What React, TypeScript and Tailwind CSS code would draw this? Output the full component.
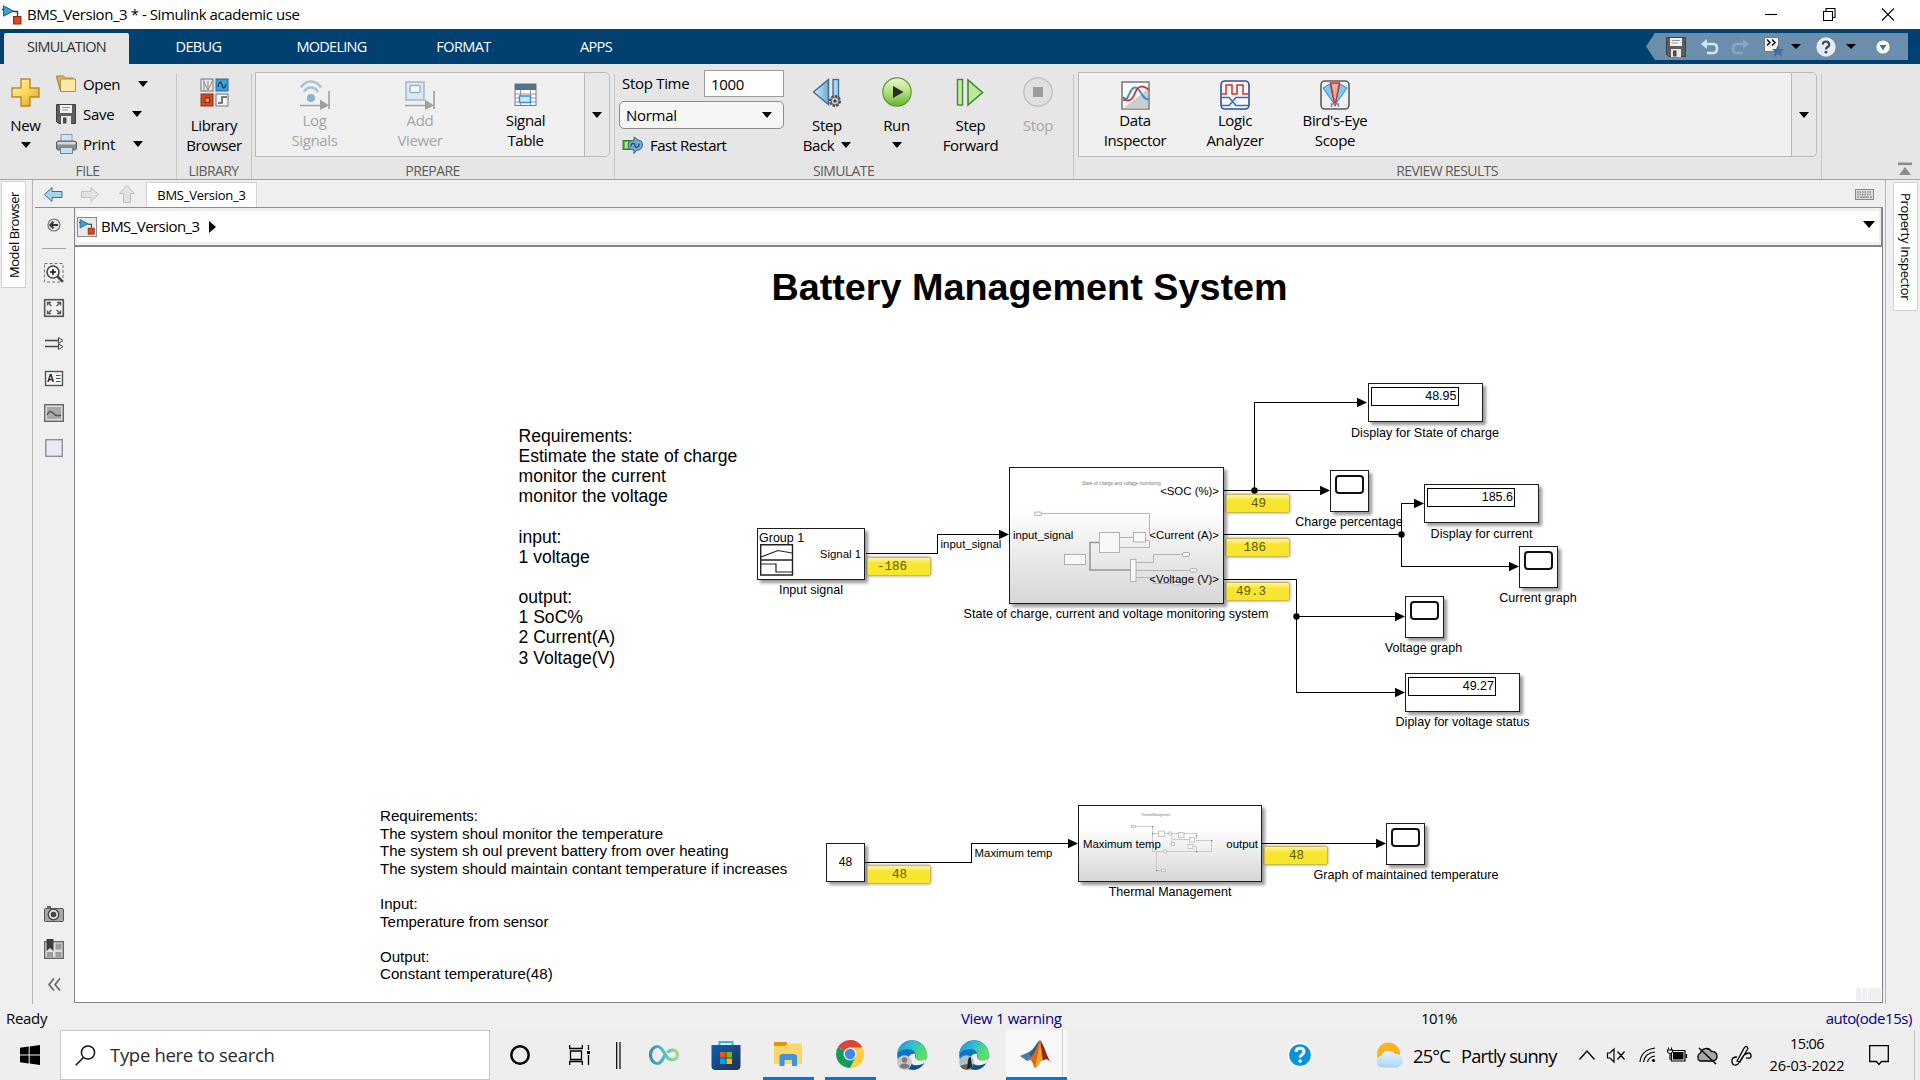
import React from "react";

type Kids = { children?: React.ReactNode };

/* ---------- small glyphs ---------- */
const Down = ({ w = 10, h = 6 }: { w?: number; h?: number }) => (
  <svg width={w} height={h} viewBox="0 0 11 6" preserveAspectRatio="none" className="shrink-0">
    <path d="M0 0H11L5.5 6Z" fill="#000" />
  </svg>
);

const ModelIcon = ({ s = 20 }: { s?: number }) => (
  <svg width={s} height={s} viewBox="0 0 20 20">
    <path d="M0 4.5H3M11 6.500H15.500V11" stroke="#333" strokeWidth="1.3" fill="none" />
    <path d="M1.500 .800 11.500 6 1.500 11.200Z" fill="#3f9fd6" stroke="#1c5f8c" strokeWidth="1" />
    <rect x="11.500" y="11.500" width="7.500" height="7.500" fill="#d9481c" stroke="#8c2a0c" />
  </svg>
);

const Floppy = () => (
  <svg width="20" height="20" viewBox="0 0 20 20">
    <path d="M.5.5H19.5V19.5H2.5L.5 17.5Z" fill="#5d5d5d" stroke="#3f3f3f" />
    <rect x="4" y="1" width="12" height="8" fill="#f1f1f1" />
    <path d="M6 3.5H14M6 6H12" stroke="#999" strokeWidth="1.2" />
    <rect x="5" y="12" width="10" height="8" fill="#e6e6e6" />
    <rect x="7" y="13.5" width="3.5" height="6" fill="#4a4a4a" />
  </svg>
);

const PlusIcon = () => (
  <svg width="29" height="29" viewBox="0 0 29 29">
    <defs>
      <linearGradient id="plusg" x1="0" y1="0" x2="1" y2="1">
        <stop offset="0" stopColor="#fff6b8" />
        <stop offset=".5" stopColor="#fbd75a" />
        <stop offset="1" stopColor="#d99b1a" />
      </linearGradient>
    </defs>
    <path d="M10 1H19V10H28V19H19V28H10V19H1V10H10Z" fill="url(#plusg)" stroke="#b98a22" strokeWidth="1.4" />
  </svg>
);

const FolderIcon = () => (
  <svg width="21" height="18" viewBox="0 0 21 18">
    <path d="M.500 1H7.500L9.500 3H17V16H5Z" fill="#d9b75c" stroke="#a98a3a" />
    <path d="M4.500 4H19.500V16.500H4.500Z" fill="#fbe9a6" stroke="#b3923c" />
    <path d="M.500 1.500 4.500 16.500" stroke="#a98a3a" />
  </svg>
);

const PrintIcon = () => (
  <svg width="21" height="20" viewBox="0 0 21 20">
    <rect x="5" y=".5" width="11" height="8" fill="#cfe3f3" stroke="#8b9cab" />
    <rect x=".5" y="7" width="20" height="9" rx="2" fill="#8c8c8c" stroke="#606060" />
    <rect x="1.5" y="8" width="18" height="2.5" fill="#d8d8d8" />
    <rect x="4.5" y="13.5" width="12" height="6" fill="#bfe0f7" stroke="#72869a" />
  </svg>
);

const LibraryIcon = () => (
  <svg width="29" height="29" viewBox="0 0 29 29">
    <rect x="1" y="1" width="12" height="12" fill="#e8e8e8" stroke="#777" />
    <path d="M4 1V13M4 4 8 12M8 3V12L13 2" stroke="#888" fill="none" />
    <rect x="16" y="1" width="12" height="12" fill="#3d9fd8" stroke="#1f6c9c" />
    <path d="M18 9C19 3 21 3 22 7S25 11 26 6" stroke="#0d3d63" fill="none" strokeWidth="1.2" />
    <rect x="1" y="16" width="12" height="12" fill="#cf4a20" stroke="#93300f" />
    <rect x="5" y="20" width="4.5" height="4.5" fill="#e98a66" stroke="#7c2509" />
    <rect x="16" y="16" width="12" height="12" fill="#f2f2f2" stroke="#777" />
    <path d="M18 25H22V19H27" stroke="#555" fill="none" strokeWidth="1.5" />
  </svg>
);

const LogSignalsIcon = () => (
  <svg width="30" height="30" viewBox="0 0 30 30">
    <path d="M1 7.500C6-.500 16-.500 21 7.500M4 12C7 6 15 6 18 12" stroke="#a9c3d6" strokeWidth="2.600" fill="none" />
    <circle cx="11" cy="18" r="4" fill="#8fb0cb" />
    <path d="M0 25.500H21M29 11V29" stroke="#a0a0a0" strokeWidth="1.600" />
    <path d="M20 19.500 29 25.500 20 30Z" fill="#a0a0a0" />
  </svg>
);

const AddViewerIcon = () => (
  <svg width="30" height="30" viewBox="0 0 30 30">
    <rect x="1" y="2" width="18" height="18" fill="#dde8f0" stroke="#a5bccd" strokeWidth="1.6" />
    <rect x="5" y="5.5" width="10" height="7" rx="1" fill="#f5f9fc" stroke="#8fb3cf" strokeWidth="1.4" />
    <path d="M0 25.5H21M29 11V29" stroke="#a0a0a0" strokeWidth="1.6" />
    <path d="M20 19.5 29 25.5 20 30Z" fill="#a0a0a0" />
  </svg>
);

const SignalTableIcon = () => (
  <svg width="23" height="24" viewBox="0 0 23 24">
    <rect x="1" y="1" width="21" height="21.5" fill="#fff" stroke="#777" />
    <rect x="1" y="1" width="21" height="6" fill="#5a6f88" />
    <rect x="3" y="2.5" width="4" height="3" fill="#2a7fd6" />
    <path d="M1 11H22M1 15H22M1 19H22M6.5 7V22M16.5 7V22" stroke="#888" strokeWidth=".9" />
    <rect x="5.5" y="13" width="11" height="6.5" fill="#cfe6fb" stroke="#3b8fe0" strokeWidth="1.5" />
  </svg>
);

const RestartIcon = () => (
  <svg width="21" height="17" viewBox="0 0 21 17">
    <rect x="1" y="3.5" width="8" height="9" fill="#59b53c" stroke="#2f7a20" />
    <rect x="3" y="5" width="3" height="6" fill="#b9ea9c" />
    <path d="M12 0 17 3.5H18.5Q20.500 5 20.500 8T17.500 13H15L12 16.500V13Q6 12.500 6 8T12 3.500Z" fill="#7aa9cb" stroke="#2e5f86" />
    <path d="M9 9.5C9 5.500 13 5.500 13 8.500S17 11 17 6.500" fill="none" stroke="#20527a" strokeWidth="1.400" />
  </svg>
);

const StepBackIcon = () => (
  <svg width="30" height="30" viewBox="0 0 30 30">
    <defs>
      <linearGradient id="sbg" x1="0" y1="0" x2="1" y2="0">
        <stop offset="0" stopColor="#d9effc" />
        <stop offset="1" stopColor="#6ba9d8" />
      </linearGradient>
    </defs>
    <path d="M16.500 2.500V27.500L1.500 15Z" fill="url(#sbg)" stroke="#3a6a94" strokeWidth="1.400" />
    <rect x="21" y="2.500" width="5.500" height="20" fill="#a9d3f0" stroke="#3a6a94" strokeWidth="1.300" />
    <circle cx="23" cy="24" r="5" fill="#ddd" stroke="#4a4a4a" strokeWidth="2" strokeDasharray="2.600 1.200" />
    <circle cx="23" cy="24" r="4" fill="#c9c9c9" stroke="#555" />
    <circle cx="23" cy="24" r="1.500" fill="#333" />
  </svg>
);

const RunIcon = () => (
  <svg width="30" height="30" viewBox="0 0 30 30">
    <defs>
      <linearGradient id="rung" x1="0" y1="0" x2="0" y2="1">
        <stop offset="0" stopColor="#e9f8d0" />
        <stop offset=".5" stopColor="#b4e07c" />
        <stop offset="1" stopColor="#63b52c" />
      </linearGradient>
    </defs>
    <circle cx="15" cy="15" r="14.200" fill="url(#rung)" stroke="#5c9a35" strokeWidth="1.200" />
    <path d="M11 9 21.500 15 11 21Z" fill="#2b2b2b" />
  </svg>
);

const StepForwardIcon = () => (
  <svg width="30" height="30" viewBox="0 0 30 30">
    <rect x="1.500" y="2.500" width="5" height="25.500" fill="#c6eba8" stroke="#3f8a34" strokeWidth="1.400" />
    <path d="M12 3V28L26.500 15.500Z" fill="#b9e89a" stroke="#3f8a34" strokeWidth="1.600" />
  </svg>
);

const StopIcon = () => (
  <svg width="30" height="30" viewBox="0 0 30 30">
    <circle cx="15" cy="15" r="14.200" fill="#e0e0e0" stroke="#bcbcbc" strokeWidth="1.200" />
    <rect x="10" y="10" width="10" height="10" fill="#9c9c9c" />
  </svg>
);

const DataInspectorIcon = () => (
  <svg width="29" height="29" viewBox="0 0 29 29">
    <rect x="1" y="1" width="27" height="27" fill="#fafafa" stroke="#777" strokeWidth="1.500" />
    <path d="M2 27.500 27 8V27.500Z" fill="#cccccc" />
    <path d="M2 19C8 21 8 6.500 14 6.500S21 20 28 18" stroke="#3f8fcf" strokeWidth="1.900" fill="none" />
    <path d="M2 16C6 22 11 20 14 12S22 4 28 9" stroke="#d23b35" strokeWidth="1.900" fill="none" />
  </svg>
);

const LogicIcon = () => (
  <svg width="30" height="30" viewBox="0 0 30 30">
    <rect x="1" y="1" width="28" height="28" rx="4" fill="#f8f8fa" stroke="#2d4f8f" strokeWidth="1.600" />
    <path d="M2 14H6V5H12V14H17V5H23V14H28" stroke="#d0312b" strokeWidth="1.500" fill="none" />
    <path d="M2 17.500H9L16 25.500H28M2 25.500H9L16 17.500H28" stroke="#2f6fb8" strokeWidth="1.500" fill="none" />
  </svg>
);

const BirdIcon = () => (
  <svg width="30" height="30" viewBox="0 0 30 30">
    <rect x="1" y="1" width="28" height="28" rx="4" fill="#efefef" stroke="#5a5a5a" strokeWidth="1.600" />
    <path d="M3 8 10 4 15 25Z" fill="#7cc8f2" stroke="#2d86c4" />
    <path d="M27 8 20 4 15 25Z" fill="#7cc8f2" stroke="#2d86c4" />
    <path d="M10.500 3H19.500L15 26Z" fill="#e5aaa0" stroke="#c93427" strokeWidth="1.400" />
    <path d="M11.500 27V24H18.500V27" stroke="#888" fill="none" strokeWidth="1.500" />
  </svg>
);

/* ---------- ribbon parts ---------- */
const Section = ({ label, cls, children }: Kids & { label: string; cls: string }) => (
  <div className={"relative flex h-[115px] shrink-0 flex-col " + cls}>
    <div className="flex h-[98px] shrink-0">{children}</div>
    <div className="h-[17px] pr-[2px] text-center text-[14px] leading-[18px] tracking-[-0.600px] text-[#5c5c5c]">{label}</div>
    <div className="absolute right-0 top-[10px] h-[105px] w-px bg-[#c6c6c6]" />
  </div>
);

const Big = ({ icon, cls, children }: Kids & { icon: React.ReactNode; cls: string }) => (
  <div className={"flex shrink-0 flex-col items-center text-center text-[15px] leading-[20px] tracking-[-0.350px] " + cls}>
    <div className="flex h-[30px] items-center justify-center">{icon}</div>
    {children}
  </div>
);

const FileRow = ({ icon, text, gap }: { icon: React.ReactNode; text: string; gap: string }) => (
  <div className="flex h-[30px] items-center">
    <div className="flex w-[27px] items-center">{icon}</div>
    <div className={"text-[15px] tracking-[-0.300px] " + gap}>{text}</div>
    <Down />
  </div>
);

const Gallery = ({ cls, children }: Kids & { cls: string }) => (
  <div className={"mt-[8px] flex h-[85px] rounded-r-[5px] border border-[#b9b9b9] bg-[#f0f0f0] " + cls}>
    <div className="flex flex-1 pl-[6px] pt-[7px]">{children}</div>
    <div className="flex w-[25px] items-center justify-center rounded-r-[5px] border-l border-[#b9b9b9] bg-[#e8e8e8]">
      <Down w={10} />
    </div>
  </div>
);

const Ribbon = () => (
  <div className="flex h-[116px] border-b border-[#a3a3a3] bg-[#e6e6e6]">
    <Section label="FILE" cls="w-[177px]">
      <Big icon={<PlusIcon />} cls="w-[51px] pt-[13px]">
        <div className="mt-[8px]">New</div>
        <div className="flex h-[20px] items-center"><Down /></div>
      </Big>
      <div className="ml-[5px] flex flex-col pt-[5px]">
        <FileRow icon={<FolderIcon />} text="Open" gap="w-[55px]" />
        <FileRow icon={<Floppy />} text="Save" gap="w-[49px]" />
        <FileRow icon={<PrintIcon />} text="Print" gap="w-[50px]" />
      </div>
    </Section>
    <Section label="LIBRARY" cls="w-[75px]">
      <Big icon={<LibraryIcon />} cls="w-[74px] pt-[13px]">
        <div className="mt-[8px]">Library</div>
        <div>Browser</div>
      </Big>
    </Section>
    <Section label="PREPARE" cls="w-[363px]">
      <Gallery cls="ml-[3px] w-[355px]">
        <Big icon={<LogSignalsIcon />} cls="w-[105px] text-[#a6a6a6]">
          <div>Log</div>
          <div>Signals</div>
        </Big>
        <Big icon={<AddViewerIcon />} cls="w-[106px] text-[#a6a6a6]">
          <div>Add</div>
          <div>Viewer</div>
        </Big>
        <Big icon={<SignalTableIcon />} cls="w-[105px]">
          <div>Signal</div>
          <div>Table</div>
        </Big>
      </Gallery>
    </Section>
    <Section label="SIMULATE" cls="w-[459px]">
      <div className="ml-[4px] w-[165px] pt-[6px] text-[15px] tracking-[-0.300px]">
        <div className="flex h-[27px] items-center justify-between pl-[3px]">
          <div>Stop Time</div>
          <div className="h-[27px] w-[80px] border border-[#9b9b9b] bg-white pl-[6px] leading-[26px]">1000</div>
        </div>
        <div className="mt-[4px] flex h-[28px] items-center justify-between rounded-[5px] border border-[#8c8c8c] bg-[#f6f6f6] pl-[6px] pr-[11px]">
          <div>Normal</div>
          <Down />
        </div>
        <div className="mt-[3px] flex h-[27px] items-center gap-[7px] pl-[3px] tracking-[-0.500px]">
          <RestartIcon />
          <div>Fast Restart</div>
        </div>
      </div>
      <div className="ml-[4px] flex pt-[13px]">
        <Big icon={<StepBackIcon />} cls="w-[78px]">
          <div className="mt-[8px]">Step</div>
          <div className="flex items-center gap-[7px]">Back <Down /></div>
        </Big>
        <Big icon={<RunIcon />} cls="w-[61px]">
          <div className="mt-[8px]">Run</div>
          <div className="flex h-[20px] items-center"><Down /></div>
        </Big>
        <Big icon={<StepForwardIcon />} cls="w-[87px]">
          <div className="mt-[8px]">Step</div>
          <div>Forward</div>
        </Big>
        <Big icon={<StopIcon />} cls="w-[48px] text-[#a6a6a6]">
          <div className="mt-[8px]">Stop</div>
        </Big>
      </div>
    </Section>
    <Section label="REVIEW RESULTS" cls="w-[748px]">
      <Gallery cls="ml-[4px] w-[739px]">
        <Big icon={<DataInspectorIcon />} cls="w-[100px]">
          <div>Data</div>
          <div>Inspector</div>
        </Big>
        <Big icon={<LogicIcon />} cls="w-[100px]">
          <div>Logic</div>
          <div>Analyzer</div>
        </Big>
        <Big icon={<BirdIcon />} cls="w-[100px]">
          <div>Bird's-Eye</div>
          <div>Scope</div>
        </Big>
      </Gallery>
    </Section>
    <div className="flex flex-1 items-end justify-end pb-[3px] pr-[8px]">
      <svg width="14" height="14" viewBox="0 0 14 14">
        <rect width="14" height="2.600" y=".500" fill="#8c8c8c" />
        <path d="M7 5 13 13H1Z" fill="#8c8c8c" />
      </svg>
    </div>
  </div>
);

const QuickAccess = () => (
  <div className="mr-[12px] flex h-[27px] w-[262px] items-center bg-[#6a8eac] pl-[20px] [clip-path:polygon(0_50%,9px_0,100%_0,100%_100%,9px_100%)]">
    <Floppy />
    <svg className="ml-[15px]" width="18" height="16" viewBox="0 0 18 16">
      <path d="M6 0V10L0 5Z" fill="#cfe6f7" />
      <path d="M5 5H12Q16 5 16 9.500T12 14H6" stroke="#cfe6f7" strokeWidth="2.600" fill="none" />
    </svg>
    <svg className="ml-[12px]" width="18" height="16" viewBox="0 0 18 16">
      <path d="M12 0V10L18 5Z" fill="#86a9c4" />
      <path d="M13 5H6Q2 5 2 9.500T6 14H12" stroke="#86a9c4" strokeWidth="2.600" fill="none" />
    </svg>
    <svg className="ml-[15px]" width="20" height="20" viewBox="0 0 20 20">
      <rect x=".500" y=".500" width="14" height="14" fill="#f4f4f4" stroke="#777" />
      <path d="M3 2.500 6 5.500 3 8.500M8 2.500 11 5.500 8 8.500" stroke="#111" strokeWidth="1.500" fill="none" />
      <path d="M14 8 16 12H20L17 15 18 20 14 17 10 20 11 15 8 12H12Z" fill="#3d6fa5" />
    </svg>
    <span className="ml-[7px] flex"><Down w={10} h={5} /></span>
    <svg className="ml-[15px]" width="20" height="20" viewBox="0 0 20 20">
      <circle cx="10" cy="10" r="9.700" fill="#e6ecf2" />
      <path d="M6.800 7.500Q7 4.500 10 4.500T13.200 7.400Q13.200 9 11.500 10T10 12.500" stroke="#33475c" strokeWidth="2.200" fill="none" />
      <circle cx="10" cy="15.200" r="1.400" fill="#33475c" />
    </svg>
    <span className="ml-[10px] flex"><Down w={10} h={5} /></span>
    <svg className="ml-[20px]" width="14" height="14" viewBox="0 0 14 14">
      <circle cx="7" cy="7" r="6.600" fill="#fff" />
      <path d="M3.500 5H10.500L7 10.500Z" fill="#4a7398" />
    </svg>
  </div>
);

/* ---------- palette ---------- */
const PaletteTop = () => (
  <svg width="40" height="260" viewBox="34 208 40 260" className="block">
    <circle cx="54" cy="225" r="6" fill="#e4e4e4" stroke="#777" strokeWidth="1.200" />
    <path d="M50 225H58M53.500 221.800 50.300 225 53.500 228.200" stroke="#333" strokeWidth="2" fill="none" />
    <path d="M42 248.500H66" stroke="#a5a5a5" />
    <rect x="44.500" y="263.500" width="18.500" height="18.500" fill="none" stroke="#777" strokeDasharray="3 2" />
    <circle cx="53" cy="272" r="6" fill="#f4f4f4" stroke="#4a4a4a" strokeWidth="1.600" />
    <path d="M50 272H56M53 269V275" stroke="#111" strokeWidth="1.500" />
    <path d="M57.500 276.500 62.500 281.500" stroke="#444" strokeWidth="2.500" />
    <rect x="44.700" y="299.700" width="18.600" height="16.600" fill="#f2f2f2" stroke="#555" strokeWidth="1.600" />
    <path d="M47.500 305.500V302.500H51M60.500 305.500V302.500H57M47.500 310.500V313.500H51M60.500 310.500V313.500H57M47.500 302.500 51.500 306M60.500 302.500 56.500 306M47.500 313.500 51.500 310M60.500 313.500 56.500 310" stroke="#555" strokeWidth="1.300" fill="none" />
    <path d="M45 340.500H60M45 346.500H60" stroke="#444" strokeWidth="1.400" />
    <path d="M58.500 337.500 63 340.500 58.500 343.500ZM58.500 343.800 63 346.600 58.500 349.500Z" fill="#eee" stroke="#444" />
    <rect x="45.500" y="371.500" width="17" height="14" fill="#f5f5f5" stroke="#555" strokeWidth="1.400" />
    <path d="M56 375.500H60.500M56 378.500H60.500M56 381.500H60.500" stroke="#555" />
    <text x="47" y="382" fontSize="10" fontWeight="bold" fontFamily="Liberation Sans" fill="#222">A</text>
    <rect x="44.700" y="404.700" width="18.600" height="16.600" fill="#dcdcdc" stroke="#666" strokeWidth="1.400" />
    <rect x="47" y="407" width="14" height="12" fill="#a9a9a9" />
    <path d="M47 415Q50 409 53 413T61 415" stroke="#555" strokeWidth="1.500" fill="none" />
    <rect x="45.700" y="439.700" width="16.600" height="16.600" fill="#e9e8f6" stroke="#8f8f98" strokeWidth="1.400" />
  </svg>
);

const PaletteBottom = () => (
  <svg width="40" height="100" viewBox="34 902 40 100" className="block">
    <rect x="44.500" y="908.500" width="19" height="13" rx="1" fill="#a8a8a8" stroke="#555" />
    <rect x="47" y="906" width="4" height="2.500" fill="#666" />
    <circle cx="53.500" cy="914.500" r="5.300" fill="#ddd" stroke="#444" strokeWidth="1.300" />
    <circle cx="53.500" cy="914.500" r="2.800" fill="#444" />
    <rect x="44.700" y="941.700" width="18.600" height="16.600" fill="#ddd" stroke="#666" strokeWidth="1.400" />
    <path d="M55.500 943.500H61.500V949.500H55.500ZM55.500 952H61.500V957H55.500ZM47 952H53V957H47Z" fill="#9c9c9c" />
    <path d="M46.500 939H53.500V951L50 948 46.500 951Z" fill="#3c3c3c" />
    <path d="M54 978.500 49 984.500 54 990.500M60 978.500 55 984.500 60 990.500" stroke="#666" strokeWidth="1.700" fill="none" />
  </svg>
);

/* ---------- diagram ---------- */
const OX = 75;
const OY = 247;

type Box = { x: number; y: number; w: number; h: number };

const Block = ({ x, y, w, h, cls = "bg-white", children }: Box & Kids & { cls?: string }) => (
  <div
    className={"absolute border-[1.5px] border-[#1c1c1c] shadow-[3px_3px_3px_rgba(0,0,0,0.4)] " + cls}
    style={{ left: x - OX, top: y - OY, width: w, height: h }}
  >
    {children}
  </div>
);

/* label centred on (cx, cy) */
const Label = ({ cx, cy, text, small }: { cx: number; cy: number; text: string; small?: boolean }) => (
  <div
    className={"absolute w-[400px] -translate-x-1/2 -translate-y-1/2 text-center leading-[14px] text-black " + (small ? "text-[11.400px]" : "text-[12.560px]")}
    style={{ left: cx - OX, top: cy - OY }}
  >
    {text}
  </div>
);

const scopes = [
  { x: 1330, y: 470 },
  { x: 1519, y: 546 },
  { x: 1405, y: 596 },
  { x: 1386, y: 823 },
];
const displays = [
  { x: 1367.5, y: 383.4, v: "48.95" },
  { x: 1424, y: 484, v: "185.6" },
  { x: 1405, y: 673, v: "49.27" },
];
const tags = [
  { x: 867, y: 557, v: "-186" },
  { x: 1226, y: 494, v: "49" },
  { x: 1226, y: 538, v: "186" },
  { x: 1226, y: 582, v: "49.3" },
  { x: 867, y: 865, v: "48" },
  { x: 1264, y: 846, v: "48" },
];
const labels = [
  { cx: 811, cy: 590, text: "Input signal" },
  { cx: 971, cy: 544, text: "input_signal", small: true },
  { cx: 1116, cy: 614, text: "State of charge, current and voltage monitoring system" },
  { cx: 1425, cy: 433, text: "Display for State of charge" },
  { cx: 1349, cy: 522, text: "Charge percentage" },
  { cx: 1481.5, cy: 534, text: "Display for current" },
  { cx: 1538, cy: 598, text: "Current graph" },
  { cx: 1423.500, cy: 648, text: "Voltage graph" },
  { cx: 1462.5, cy: 722, text: "Diplay for voltage status" },
  { cx: 1013.5, cy: 853, text: "Maximum temp", small: true },
  { cx: 1170, cy: 892, text: "Thermal Management" },
  { cx: 1406, cy: 875, text: "Graph of maintained temperature" },
];
const arrows = [
  [1009, 534.5], [1330, 490.5], [1367, 402.5], [1424, 503.5], [1519, 566.5],
  [1405, 616.5], [1405, 692.5], [1078, 843.5], [1386, 843.5],
];

const Wires = () => (
  <svg className="absolute left-0 top-0" width="1807" height="755" viewBox="75 247 1807 755">
    <g stroke="#000" strokeWidth="1.100" fill="none" shapeRendering="crispEdges">
      <path d="M866 553.500H937.500V534.500H1001" />
      <path d="M1224 490.500H1322M1254.500 490.500V402.500H1360" />
      <path d="M1224 534.500H1401.500M1401.500 566.500V503.500H1416M1401.500 566.500H1511" />
      <path d="M1224 579.500H1296.500V692.500H1397M1296.500 616.500H1397" />
      <path d="M865 862.500H971.500V843.500H1070" />
      <path d="M1262 843.500H1378" />
    </g>
    {arrows.map(([x, y]) => (
      <path key={x + "," + y} d={`M${x} ${y}L${x - 10} ${y - 4.8}V${y + 4.8}Z`} />
    ))}
    <circle cx="1254.500" cy="490.500" r="3.200" />
    <circle cx="1401.500" cy="534.500" r="3.200" />
    <circle cx="1296.500" cy="616.500" r="3.200" />
  </svg>
);

const Diagram = () => (
  <>
    <div className="absolute left-[954.500px] top-[17px] w-[700px] -translate-x-1/2 text-center text-[37.750px] font-bold leading-[46px] text-black">
      Battery Management System
    </div>
    <div className="absolute left-[443.500px] top-[178.700px] whitespace-pre text-[17.570px] leading-[20.170px]">
      {"Requirements:\nEstimate the state of charge\nmonitor the current\nmonitor the voltage\n\ninput:\n1 voltage\n\noutput:\n1 SoC%\n2 Current(A)\n3 Voltage(V)"}
    </div>
    <div className="absolute left-[305px] top-[560px] whitespace-pre text-[15.080px] leading-[17.600px]">
      {"Requirements:\nThe system shoul monitor the temperature\nThe system sh oul prevent battery from over heating\nThe system should maintain contant temperature if increases\n\nInput:\nTemperature from sensor\n\nOutput:\nConstant temperature(48)"}
    </div>

    <Block x={757} y={528} w={108} h={52}>
      <div className="absolute left-px top-[2px] text-[12.500px] leading-[14px]">Group 1</div>
      <div className="absolute right-[3px] top-[18px] text-[11.400px] leading-[14px]">Signal 1</div>
      <svg className="absolute left-[2px] top-[15px]" width="34" height="32" viewBox="0 0 34 32">
        <path d="M.700.700H32.500V31H.700ZM.700 16H32.500" fill="none" stroke="#222" strokeWidth="1.400" />
        <path d="M1 13 18 6.500 32 9M1 20H16V28H32" fill="none" stroke="#222" strokeWidth="1.200" />
      </svg>
    </Block>

    <Block x={1009} y={467} w={215} h={137} cls="bg-gradient-to-b from-white from-30% to-[#d6d6d6]">
      <svg className="absolute left-0 top-0" width="212" height="134" viewBox="1010 468 212 134">
        <text x="1082" y="485" fontSize="4.600" fill="#777">State of charge and voltage monitoring</text>
        <g fill="none" stroke="#b5b5b5">
          <path d="M1041.500 513.500H1149.500V534.500M1119 537.500H1133M1146 540.500H1149.500V547.500H1119" />
          <path d="M1136 562.500H1153.500V554.500H1182M1136 570.500H1190M1136 577.500H1153.500V583.500H1175" />
          <path d="M1099 542.500H1090V570H1130" stroke="#999" strokeWidth="1.600" />
        </g>
        <g fill="#f8f8f8" stroke="#b0b0b0">
          <rect x="1034.500" y="512" width="7" height="3.500" rx="1.500" />
          <rect x="1099.500" y="532.500" width="20" height="20" />
          <rect x="1133.500" y="532.500" width="12" height="9.500" />
          <rect x="1064.500" y="554.500" width="21" height="10" />
          <rect x="1130.500" y="559.500" width="5.500" height="22" />
          <rect x="1182.500" y="552.500" width="7" height="4" rx="1.500" />
          <rect x="1190" y="568.500" width="7" height="3.500" rx="1.500" />
          <rect x="1173" y="581.500" width="7" height="3.500" rx="1.500" />
        </g>
      </svg>
      <div className="absolute left-[3px] top-[60px] text-[11.300px] leading-[14px]">input_signal</div>
      <div className="absolute right-[4px] top-[16px] text-[11.400px] leading-[14px]">&lt;SOC (%)&gt;</div>
      <div className="absolute right-[4px] top-[60px] text-[11.400px] leading-[14px]">&lt;Current (A)&gt;</div>
      <div className="absolute right-[4px] top-[104px] text-[11.400px] leading-[14px]">&lt;Voltage (V)&gt;</div>
    </Block>

    <Block x={826} y={843} w={39} h={39}>
      <div className="text-center text-[12px] leading-[36px]">48</div>
    </Block>

    <Block x={1078} y={805} w={184} h={77} cls="bg-gradient-to-b from-white from-30% to-[#d6d6d6]">
      <svg className="absolute left-0 top-0" width="181" height="74" viewBox="1079 806 181 74">
        <text x="1141" y="816" fontSize="3.500" fill="#888" textLength="29">Thermal Management</text>
        <g fill="none" stroke="#c0c0c0" strokeWidth=".800">
          <path d="M1135 826.500H1152.500V851.500M1153 833.500H1196.500V839M1172 833V843M1173 839.500H1192M1196 840.500H1211.500V851.500H1152.500M1196.500 851V846.500H1190M1156.500 852V870.500H1162" />
        </g>
        <g fill="#f8f8f8" stroke="#bbb" strokeWidth=".800">
          <rect x="1131.500" y="825.500" width="4" height="2" />
          <rect x="1158.500" y="831" width="6" height="5.500" />
          <rect x="1169" y="832" width="2.500" height="3" />
          <rect x="1178.500" y="832.500" width="5.500" height="5" />
          <rect x="1189.500" y="837.500" width="5" height="4.500" />
          <rect x="1171.500" y="842.500" width="3" height="3" />
          <rect x="1188" y="844.500" width="5" height="4" />
          <rect x="1164" y="850" width="2.500" height="3" />
          <rect x="1161.500" y="869.500" width="4" height="2" />
        </g>
        <g fill="#777">
          <rect x="1152" y="826" width="1.300" height="1.300" />
          <rect x="1152" y="833" width="1.300" height="1.300" />
          <rect x="1196" y="835" width="1.300" height="1.300" />
          <rect x="1211" y="840" width="1.300" height="1.300" />
          <rect x="1196" y="851" width="1.300" height="1.300" />
          <rect x="1156" y="870" width="1.300" height="1.300" />
        </g>
      </svg>
      <div className="absolute left-[4px] top-[31px] text-[11.400px] leading-[14px]">Maximum temp</div>
      <div className="absolute right-[3px] top-[31px] text-[11.400px] leading-[14px]">output</div>
    </Block>

    {scopes.map((s) => (
      <Block key={s.y} x={s.x} y={s.y} w={39} h={42}>
        <div className="ml-[4px] mt-[4px] h-[19px] w-[29px] rounded-[4px] border-2 border-[#111]" />
      </Block>
    ))}
    {displays.map((d) => (
      <Block key={d.v} x={d.x} y={d.y} w={115} h={39}>
        <div className="ml-[2px] mt-[3px] h-[19px] w-[88px] border border-black pr-px text-right text-[12.500px] leading-[17px]">{d.v}</div>
      </Block>
    ))}
    {tags.map((t) => (
      <div
        key={t.x + "," + t.y}
        className="absolute h-[19px] w-[64px] rounded-[2px] border border-[#c9b75a] bg-gradient-to-b from-[#fdf59b] to-[#f8e62e] to-30% pr-[23px] text-right font-[Liberation_Mono] text-[12.500px] leading-[18px] text-[#5f5810] shadow-[0_0_3px_rgba(0,0,0,0.45)]"
        style={{ left: t.x - OX, top: t.y - OY }}
      >
        {t.v}
      </div>
    ))}
    <Wires />
    {labels.map((l) => (
      <Label key={l.text} {...l} />
    ))}
    <div className="absolute bottom-px right-px flex h-[13px] gap-px">
      <div className="w-[5px] bg-[#efefef]" />
      <div className="w-[5px] bg-[#efefef]" />
      <div className="w-[13px] bg-[#efefef]" />
    </div>
  </>
);

/* ---------- taskbar icons ---------- */
const EdgeIcon = ({ badge }: { badge: React.ReactNode }) => (
  <svg width="30" height="30" viewBox="0 0 30 30">
    <defs>
      <linearGradient id="edgeTop" x1="0" y1="0" x2="1" y2=".400">
        <stop offset="0" stopColor="#1f8fe0" />
        <stop offset=".500" stopColor="#2dc0d2" />
        <stop offset="1" stopColor="#5fe05a" />
      </linearGradient>
    </defs>
    <circle cx="15" cy="15" r="14.800" fill="#1272c4" />
    <path d="M.200 14A15 15 0 0 1 30 14C30 18.500 27 21 22.500 21 18 21 17 19 18.500 17 19.500 12.500 16 9 11 9 5 9 1.500 12 .200 14Z" fill="url(#edgeTop)" />
    <path d="M18.300 14C14 12.500 11 16 12 20 13.500 25.500 21 27 27.500 23 28.500 22 29.500 20 28.500 19 24 22 16 21 18.300 14Z" fill="#eeeeee" />
    <path d="M11.500 18C11 25 18 28 27 23.500 22 30.500 15 31 11 28Z" fill="#0d4f96" />
    {badge}
  </svg>
);

const TaskIcon = ({ cls, children }: Kids & { cls: string }) => (
  <div className={"flex h-[50px] shrink-0 items-center justify-center " + cls}>{children}</div>
);

const Taskbar = () => (
  <div className="flex h-[50px] items-stretch bg-[#eeeeee] text-black">
    <TaskIcon cls="w-[60px]">
      <svg width="20" height="20" viewBox="0 0 20 20">
        <path d="M0 2.800 8.700 1.600V9.500H0ZM9.700 1.400 20 0V9.500H9.700ZM0 10.500H8.700V18.400L0 17.200ZM9.700 10.500H20V20L9.700 18.600Z" />
      </svg>
    </TaskIcon>
    <div className="flex w-[430px] items-center border border-[#c8c8c8] bg-white pl-[14px]">
      <svg width="21" height="21" viewBox="0 0 21 21">
        <circle cx="13" cy="7.500" r="6.600" fill="none" stroke="#111" strokeWidth="1.500" />
        <path d="M8.500 12.500.700 20.300" stroke="#111" strokeWidth="1.500" />
      </svg>
      <div className="ml-[14px] text-[18.500px] tracking-[-0.300px] text-[#2b2b2b]">Type here to search</div>
    </div>
    <TaskIcon cls="w-[60px]">
      <svg width="22" height="22" viewBox="0 0 22 22">
        <circle cx="11" cy="11" r="8.700" fill="none" stroke="#000" strokeWidth="2.500" />
      </svg>
    </TaskIcon>
    <TaskIcon cls="w-[60px]">
      <svg width="22" height="20" viewBox="0 0 22 20">
        <path d="M.700 0V3.500H13.300V0M1.500 6H12.500V14.500H1.500ZM.700 20V16.500H13.300V20" fill="none" stroke="#000" strokeWidth="1.300" />
        <path d="M19.500 0V5M19.500 10V20" stroke="#000" strokeWidth="1.300" />
        <rect x="18" y="6" width="3" height="3" />
      </svg>
    </TaskIcon>
    <TaskIcon cls="w-[16px]">
      <svg width="5" height="27" viewBox="0 0 5 27"><path d="M.700 0V27M4 0V27" stroke="#000" strokeWidth="1.200" /></svg>
    </TaskIcon>
    <TaskIcon cls="ml-[22px] w-[32px]">
      <svg width="31" height="22" viewBox="0 0 31 22">
        <defs>
          <linearGradient id="inf" x1="0" y1="0" x2="1" y2="0">
            <stop offset="0" stopColor="#3b8fb5" />
            <stop offset=".500" stopColor="#4fc3b6" />
            <stop offset="1" stopColor="#a5dc8c" />
          </linearGradient>
        </defs>
        <path d="M16 11C13 17 11.500 19.500 8.500 19.500A7 8.500 0 0 1 8.500 2.500C13 2.500 15 9 18 13 20 16.500 28.500 17 28.500 11S21 5 18.500 8.500" stroke="url(#inf)" strokeWidth="3.200" fill="none" />
      </svg>
    </TaskIcon>
    <TaskIcon cls="ml-[31px] w-[30px]">
      <svg width="30" height="30" viewBox="0 0 30 30">
        <defs>
          <linearGradient id="store" x1="0" y1="0" x2="1" y2="1">
            <stop offset="0" stopColor="#0b63b5" />
            <stop offset="1" stopColor="#23304d" />
          </linearGradient>
        </defs>
        <path d="M8.500 6V2H21.500V6" fill="none" stroke="#31b4ee" strokeWidth="2" />
        <path d="M.500 5H29.500V26Q29.500 30 25.500 30H4.500Q.500 30 .500 26Z" fill="url(#store)" />
        <rect x="9" y="12" width="5.500" height="5.500" fill="#f25022" />
        <rect x="15.500" y="12" width="5.500" height="5.500" fill="#7fba00" />
        <rect x="9" y="18.500" width="5.500" height="5.500" fill="#00a4ef" />
        <rect x="15.500" y="18.500" width="5.500" height="5.500" fill="#ffb900" />
      </svg>
    </TaskIcon>
    <TaskIcon cls="ml-[22px] w-[51px] border-b-[3px] border-[#0078d7]">
      <svg width="28" height="24" viewBox="0 0 28 24" className="-ml-[2px]">
        <path d="M0 0H12L14 2.500H28V5H0Z" fill="#d9a012" />
        <path d="M0 4H11L14 1.500H28V22H0Z" fill="#fbd768" />
        <path d="M0 0H12L13.500 1.500 11 4H0Z" fill="#d9980a" />
        <path d="M5.500 24V15Q5.500 12 8.500 12H20Q23 12 23 15V24H18V18H10.500V24Z" fill="#3d94dc" />
      </svg>
    </TaskIcon>
    <TaskIcon cls="ml-[11px] w-[51px] border-b-[3px] border-[#0078d7]">
      <svg width="28" height="28" viewBox="0 0 28 28" className="-ml-px mt-px">
        <path d="M14 14 1.900 7A14 14 0 0 1 26.100 7Z" fill="#db4437" />
        <path d="M14 14 26.100 7A14 14 0 0 1 14 28Z" fill="#ffcd40" />
        <path d="M14 14V28A14 14 0 0 1 1.900 7Z" fill="#0f9d58" />
        <path d="M14 7.500H26.400A14 14 0 0 0 14 0Z" fill="#db4437" />
        <path d="M8.300 17.300 14 28 19.600 17.300Z" fill="#0f9d58" />
        <path d="M19.700 17.200 14 28A14 14 0 0 0 26.300 7.500H14Z" fill="#ffcd40" />
        <circle cx="14" cy="14" r="6.500" fill="#f1f1f1" />
        <circle cx="14" cy="14" r="5.200" fill="#4285f4" />
      </svg>
    </TaskIcon>
    <TaskIcon cls="ml-[21px] w-[30px]">
      <EdgeIcon badge={<g><circle cx="7.500" cy="22.500" r="7.300" fill="#c8c6c4" /><circle cx="7.500" cy="20" r="2.700" fill="#7d7b79" /><path d="M2.500 27Q3 23.500 7.500 23.500T12.500 27Q7.500 30.500 2.500 27Z" fill="#7d7b79" /></g>} />
    </TaskIcon>
    <TaskIcon cls="ml-[32px] w-[30px]">
      <EdgeIcon badge={<g><circle cx="7.500" cy="22.500" r="7.300" fill="#a9c3cd" /><path d="M1 26Q7 23 14.500 24.500 12 30 7.500 29.800 3 29.500 1 26Z" fill="#6f5e4c" /><path d="M8 29 9 20Q10 15.500 12 18L13 27Z" fill="#23252b" /></g>} />
    </TaskIcon>
    <div className="ml-[17px] flex h-[50px] w-[61px] border-b-[3px] border-[#0078d7] bg-[#f8f8f8]">
      <div className="flex w-[57px] items-center justify-center border-r border-[#d0d0d0]">
        <svg width="31" height="28" viewBox="0 0 31 28" className="ml-[3px] mt-px">
          <path d="M0 16 9 12 13 16 7 21Z" fill="#3f7fae" />
          <path d="M9 12C14 10 16 3 20 0L15 14 11 18Z" fill="#2c5d86" />
          <path d="M20 0C17 6 16 14 7 21L11 20C13 23 14 27 15 28 19 26 20 20 23 20Z" fill="#e0641c" />
          <path d="M20 0C24 4 27 17 31 23 27 18 25 19 23 21Z" fill="#9c2312" />
          <path d="M20 2C19 12 16 20 15 28 18 26 20 21 22 20Z" fill="#f5a52a" />
        </svg>
      </div>
    </div>
    <div className="flex flex-1 items-center">
      <svg className="ml-[220px] shrink-0" width="26" height="26" viewBox="0 0 26 26">
        <circle cx="13" cy="13" r="12.500" fill="#fff" />
        <circle cx="13" cy="13" r="10.800" fill="#0a93d8" />
        <path d="M9 10Q9 6.300 13 6.300T17 9.800Q17 11.600 15 12.800T13.200 15.500" stroke="#fff" strokeWidth="2.900" fill="none" />
        <circle cx="13.100" cy="19" r="1.800" fill="#fff" />
      </svg>
      <svg className="ml-[62px] shrink-0" width="28" height="26" viewBox="0 0 28 26">
        <defs>
          <linearGradient id="cloudg" x1="0" y1="0" x2="0" y2="1">
            <stop offset="0" stopColor="#eaf6fe" />
            <stop offset="1" stopColor="#a9d5f3" />
          </linearGradient>
        </defs>
        <circle cx="13.500" cy="12" r="11.500" fill="#fbb321" />
        <path d="M6 25.500A6 6 0 0 1 6 14 8 8 0 0 1 20 12 6.500 6.500 0 0 1 22 25.500Z" fill="url(#cloudg)" />
      </svg>
      <div className="ml-[10px] mt-[2px] flex gap-[11px] whitespace-nowrap text-[18.300px] tracking-[-0.800px]"><span>25°C</span><span>Partly sunny</span></div>
    </div>
    <div className="flex w-[343px] shrink-0 items-center">
      <svg className="mt-px shrink-0" width="176" height="24" viewBox="1577 1044 176 24" fill="none" stroke="#000">
        <path d="M1579.500 1059.500 1587 1051 1594.500 1059.500" strokeWidth="1.300" />
        <path d="M1607.500 1053H1610L1614 1049V1062L1610 1058H1607.500ZM1617.500 1051.500 1624.500 1059.500M1624.500 1051.500 1617.500 1059.500" strokeWidth="1.200" />
        <path d="M1640 1062Q1641 1050 1655 1048M1643.500 1062Q1645 1053 1655 1052M1647.500 1062Q1648.500 1057 1655 1056" strokeWidth="1.200" />
        <circle cx="1653.500" cy="1060.500" r="1.600" fill="#000" stroke="none" />
        <path d="M1671.500 1050.500H1685V1061H1671.500ZM1686.500 1054V1058" strokeWidth="1.200" />
        <rect x="1673" y="1052" width="10.500" height="7.500" fill="#000" stroke="none" />
        <path d="M1668.500 1047.500V1050M1671.500 1047.500V1050M1667.500 1050H1672.500V1052Q1670 1055 1667.500 1052ZM1670 1054V1060" strokeWidth="1.100" fill="#eee" />
        <path d="M1700 1061A4.500 4.500 0 0 1 1700.500 1053 6 6 0 0 1 1711.500 1051.500 4.800 4.800 0 0 1 1713 1061Z" fill="#a8a8a8" strokeWidth="1.300" />
        <path d="M1699 1048 1716 1064" strokeWidth="1.400" />
        <path d="M1737 1061 1744.500 1047.500Q1747 1045 1748 1048.500L1740 1062ZM1737 1057Q1731 1057 1732 1062T1738 1064L1744 1055Q1750 1051 1751 1055T1746 1058" strokeWidth="1.300" />
      </svg>
      <div className="ml-[12px] flex w-[84px] flex-col items-center text-[14.500px] leading-[22px] tracking-[-0.600px]">
        <div>15:06</div>
        <div className="tracking-[-0.050px]">26-03-2022</div>
      </div>
      <svg className="ml-[20px] shrink-0" width="20" height="21" viewBox="0 0 20 21">
        <path d="M.700.700H19.300V16.500H12.500L10 19.500 7.500 16.500H.700Z" fill="none" stroke="#000" strokeWidth="1.300" />
      </svg>
      <div className="ml-[25px] h-full w-px bg-[#c4c4c4]" />
    </div>
  </div>
);

export default function App() {
  return (
    <div className="flex h-[1080px] w-[1920px] flex-col overflow-hidden bg-[#efefef] font-['Open_Sans',sans-serif] text-black">
      {/* title bar */}
      <div className="flex h-[29px] items-center bg-white pl-[2px]">
        <ModelIcon />
        <div className="ml-[5px] flex-1 text-[15px] leading-[29px] tracking-[-0.430px]">BMS_Version_3 * - Simulink academic use</div>
        <svg width="129" height="13" viewBox="0 0 129 13" className="mr-[26px]" fill="none" stroke="#000" strokeWidth="1.100">
          <path d="M0 6.500H12" />
          <path d="M58.500 3.500H67.500V12.500H58.500ZM61 3.500V.500H70V9.500H67.500" />
          <path d="M117 .500 129 12.500M129 .500 117 12.500" />
        </svg>
      </div>

      {/* tool strip tabs */}
      <div className="flex h-[35px] items-center bg-[#004172] pl-[4px] text-[14.500px] text-white">
        <div className="mt-[4px] h-[31px] w-[125px] rounded-t-[2px] bg-[#e6e6e6] text-center leading-[28px] tracking-[-0.750px] text-[#333]">SIMULATION</div>
        <div className="w-[139px] text-center tracking-[-0.600px]">DEBUG</div>
        <div className="w-[127px] text-center tracking-[-0.750px]">MODELING</div>
        <div className="w-[137px] text-center tracking-[-0.600px]">FORMAT</div>
        <div className="w-[128px] text-center tracking-[-0.600px]">APPS</div>
        <div className="flex flex-1 justify-end">
          <QuickAccess />
        </div>
      </div>

      <Ribbon />

      {/* work area */}
      <div className="flex h-[824px]">
        <div className="w-[33px] border-r border-[#b5b5b5] pl-px pt-px">
          <div className="flex h-[107px] w-[25px] items-center justify-center border border-[#d2d2d2] bg-white">
            <div className="rotate-180 text-[13px] leading-[16px] tracking-[-0.450px] [writing-mode:vertical-rl]">Model Browser</div>
          </div>
        </div>

        <div className="ml-[2px] flex w-[1848px] flex-col">
          <div className="flex h-[28px] items-center border-b border-[#8c8c8c]">
            <svg width="100" height="20" viewBox="44 185 100 20" className="ml-[9px] mt-px">
              <path d="M44.500 195.500 52 188.500V192.500H62V198.500H52V202.500Z" fill="#a5d3f0" stroke="#3f7090" />
              <path d="M98.500 195.500 91 188.500V192.500H81.500V198.500H91V202.500Z" fill="#e2e2e2" stroke="#c2c2c2" />
              <path d="M127 186.500 119.500 194.500H123.500V203.500H130.500V194.500H134.500Z" fill="#e2e2e2" stroke="#c2c2c2" />
            </svg>
            <div className="ml-[2px] h-[25px] w-[111px] self-end border border-b-0 border-[#d4d4d4] bg-white text-center text-[13px] leading-[25px] tracking-[-0.250px]">BMS_Version_3</div>
            <div className="flex-1" />
            <svg width="19" height="11" viewBox="0 0 19 11" className="mr-[9px] mt-px">
              <rect x=".500" y=".500" width="18" height="10" fill="#ddd" stroke="#888" />
              <path d="M2 3H17M2 5.500H17" stroke="#888" strokeDasharray="1.500 1" strokeWidth="1.300" />
              <path d="M2 8.200H4M5 8.200H14M15 8.200H17" stroke="#888" strokeWidth="1.300" />
            </svg>
          </div>
          <div className="flex flex-1">
            <div className="flex w-[39px] flex-col justify-between">
              <div className="-ml-px"><PaletteTop /></div>
              <div className="-ml-px pb-[2px]"><PaletteBottom /></div>
            </div>
            <div className="flex flex-1 flex-col">
              <div className="h-[39px] border-2 border-b-2 border-l border-t-0 border-[#808590] bg-white">
                <div className="flex h-[37px] items-center border-y-[3px] border-l-2 border-r-2 border-[#efefef] bg-white pr-[4px]">
                  <div className="flex h-[20px] w-[20px] items-center justify-center border border-[#8a8a8a] bg-[#e9e9e9]">
                    <ModelIcon s={16} />
                  </div>
                  <div className="ml-[4px] text-[15px] tracking-[-0.550px]">BMS_Version_3</div>
                  <svg className="ml-[9px]" width="7" height="12" viewBox="0 0 7 12"><path d="M0 0 7 6 0 12Z" /></svg>
                  <div className="flex-1" />
                  <div className="-mt-[4px] flex"><Down w={12} h={7} /></div>
                </div>
              </div>
              <div className="relative h-[756px] w-[1809px] overflow-hidden border border-t-0 border-[#808590] bg-white font-['Liberation_Sans',sans-serif] text-black">
                <Diagram />
              </div>
            </div>
          </div>
        </div>

        <div className="ml-[2px] flex-1 border-l border-[#b5b5b5] pl-[7px] pt-[2px]">
          <div className="flex h-[129px] w-[25px] items-center justify-center border border-[#d2d2d2] bg-white">
            <div className="text-[13px] leading-[16px] tracking-[-0.320px] [writing-mode:vertical-rl]">Property Inspector</div>
          </div>
        </div>
      </div>

      {/* status bar */}
      <div className="flex h-[26px] items-center justify-between pl-[6px] pr-[8px] pt-[2px] text-[15px] tracking-[-0.300px]">
        <div className="w-[955px]">Ready</div>
        <div className="w-[460px] tracking-[-0.350px] text-[#000080]">View 1 warning</div>
        <div className="flex-1 tracking-[-0.600px]">101%</div>
        <div className="tracking-[-0.450px] text-[#000080]">auto(ode15s)</div>
      </div>

      <Taskbar />
    </div>
  );
}
